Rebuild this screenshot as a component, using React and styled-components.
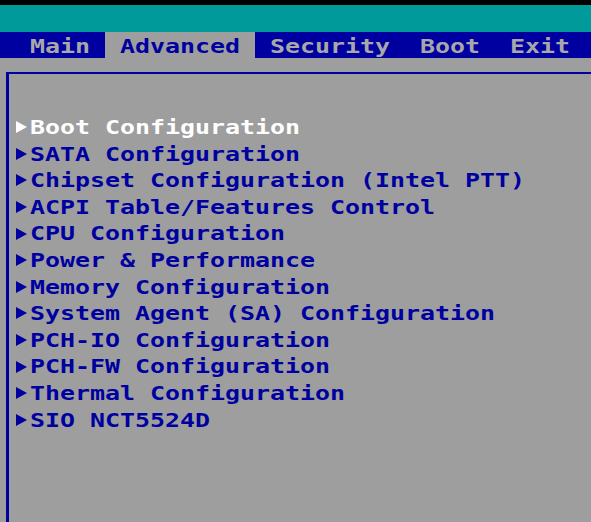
import React from "react";
import styled, { createGlobalStyle } from "styled-components";

const GlobalStyle = createGlobalStyle`
  html, body {
    margin: 0;
    padding: 0;
    background: #9e9e9e;
  }
  #root {
    height: 100vh;
  }
`;

// the firmware font sits on a 15px character grid
const CELL = 15;

export default function App() {
  const tabs = ["Main", "Advanced", "Security", "Boot", "Exit"];
  const items = [
    "Boot Configuration",
    "SATA Configuration",
    "Chipset Configuration (Intel PTT)",
    "ACPI Table/Features Control",
    "CPU Configuration",
    "Power & Performance",
    "Memory Configuration",
    "System Agent (SA) Configuration",
    "PCH-IO Configuration",
    "PCH-FW Configuration",
    "Thermal Configuration",
    "SIO NCT5524D",
  ];
  return (
    <Screen>
      <GlobalStyle />
      <TitleBar />
      <TabBar>
        {tabs.map((tab) => (
          <Tab key={tab} $chars={tab.length} $active={tab === "Advanced"}>
            <Label>{tab}</Label>
          </Tab>
        ))}
      </TabBar>
      <Panel>
        <ItemList>
          {items.map((item, index) => (
            <Item key={item} $selected={index === 0}>
              <Arrow>
                <svg width="11" height="12" viewBox="0 0 11 12">
                  <polygon points="0,0 11,6 0,12" fill="currentColor" />
                </svg>
              </Arrow>
              <Label>{item}</Label>
            </Item>
          ))}
        </ItemList>
      </Panel>
    </Screen>
  );
}

const Screen = styled.div`
  height: 100%;
  display: flex;
  flex-direction: column;
  background: #9e9e9e;
  font-family: "DejaVu Sans Mono", "Liberation Mono", monospace;
  font-weight: bold;
  font-size: 20px;
`;

const TitleBar = styled.div`
  height: 27px;
  border-top: 5px solid #000;
  background: #009a9a;
`;

const TabBar = styled.div`
  display: flex;
  height: 26px;
  padding-left: ${CELL}px;
  background: #0000a0;
`;

const Tab = styled.div`
  box-sizing: border-box;
  width: ${(p) => (p.$chars + 2) * CELL}px;
  padding: 1px ${CELL}px 0;
  line-height: 26px;
  color: ${(p) => (p.$active ? "#0000a0" : "#a8a8a8")};
  background: ${(p) => (p.$active ? "#9e9e9e" : "transparent")};
`;

const Label = styled.span`
  display: inline-block;
  white-space: pre;
  transform: scaleX(1.246);
  transform-origin: left center;
`;

const Panel = styled.div`
  flex: 1;
  margin: 14px 0 0 6px;
  border-top: 2px solid #0000a0;
  border-left: 3px solid #0000a0;
  padding: 40px 0 0 6px;
`;

const ItemList = styled.ul`
  list-style: none;
  margin: 0;
  padding: 0;
`;

const Item = styled.li`
  display: flex;
  align-items: center;
  height: 26.6px;
  line-height: 26.6px;
  color: ${(p) => (p.$selected ? "#ffffff" : "#0000a0")};
`;

const Arrow = styled.span`
  display: flex;
  align-items: center;
  width: ${CELL}px;
  height: 100%;
  padding-left: 1px;
  box-sizing: border-box;
  svg {
    display: block;
  }
`;
